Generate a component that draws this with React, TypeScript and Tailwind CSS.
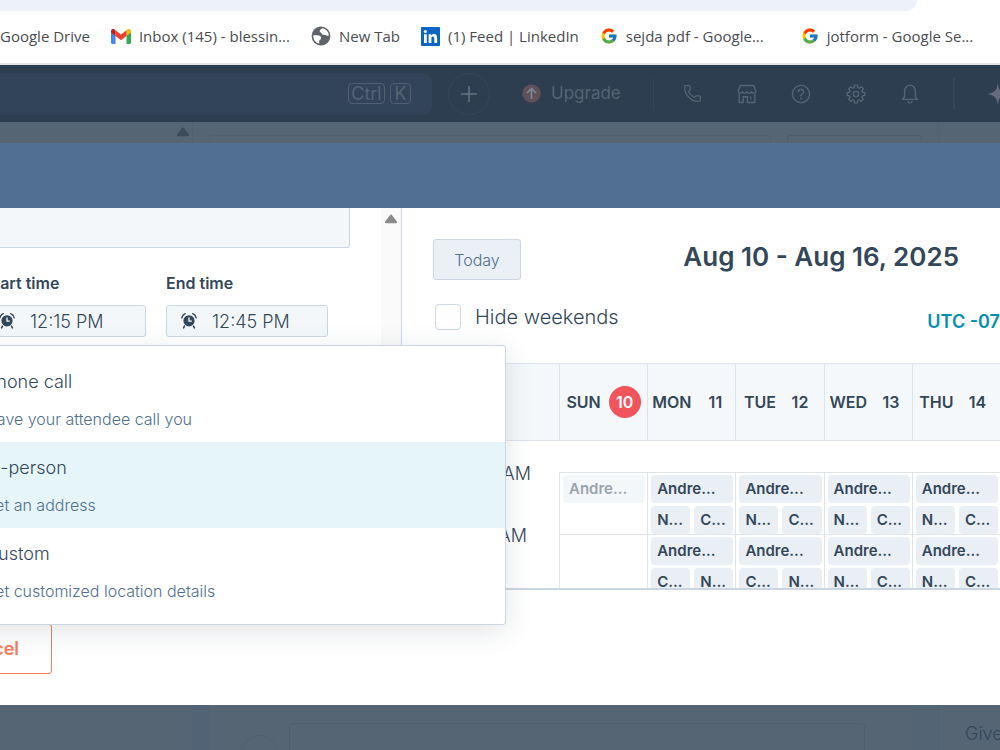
import React from "react";
import { FcGoogle } from "react-icons/fc";
import { Phone } from "lucide-react";

type Day = { name: string; date: string; today?: boolean; slots: [string, string][] };

const days: Day[] = [
  { name: "SUN", date: "10", today: true, slots: [] },
  { name: "MON", date: "11", slots: [["N...", "C..."], ["C...", "N..."]] },
  { name: "TUE", date: "12", slots: [["N...", "C..."], ["C...", "N..."]] },
  { name: "WED", date: "13", slots: [["N...", "C..."], ["N...", "C..."]] },
  { name: "THU", date: "14", slots: [["N...", "C..."], ["N...", "C..."]] },
];

const hours = ["10:00 AM", "11:00 AM"];

const locations = [
  { title: "Phone call", detail: "Have your attendee call you" },
  { title: "In-person", detail: "Set an address", active: true },
  { title: "Custom", detail: "Set customized location details" },
];

function GmailIcon() {
  return (
    <svg width="20" height="15" viewBox="0 0 20 15" aria-hidden="true">
      <path d="M0 2.2V13.6C0 14.4.6 15 1.4 15H4.5V6.2Z" fill="#4285f4" />
      <path d="M20 2.2V13.6C20 14.4 19.4 15 18.6 15H15.5V6.2Z" fill="#34a853" />
      <path d="M15.5 1.6V7L20 3.6V2C20 .2 17.9-.7 16.4.5Z" fill="#fbbc04" />
      <path d="M4.5 7V1.2L10 5.4 15.5 1.2V7L10 11.2Z" fill="#ea4335" />
      <path d="M0 2V3.6L4.5 7V1.6L3.6.5C2.1-.7 0 .2 0 2Z" fill="#c5221f" />
    </svg>
  );
}

function GlobeIcon() {
  return (
    <svg width="20" height="20" viewBox="0 0 20 20" aria-hidden="true">
      <circle cx="10" cy="10" r="9.4" fill="#5f6368" />
      <path d="M11.2 2.2C10 3.2 8.600 3.800 8.700 5.200C8.800 6.600 10.600 6.300 10.800 7.600C11 9 12.400 8.900 13.600 8.700C14.800 8.600 15.200 9.500 16.200 9.700C17 9.900 17.600 9.700 17.800 9.200C17.600 5.400 14.800 2.600 11.200 2.200Z" fill="#fff" />
      <path d="M2.300 9.200C4.200 9.500 6 9.200 7.800 9.400C9.600 9.700 10.200 11 10 12.400C9.800 13.500 8.700 13.600 8.300 14.500C7.900 15.500 8.200 16.600 8.400 17.600C4.600 16.900 2 13.600 2.300 9.200Z" fill="#fff" />
    </svg>
  );
}

function LinkedInIcon() {
  return (
    <svg width="19" height="19" viewBox="0 0 19 19" aria-hidden="true">
      <rect width="19" height="19" rx="1" fill="#0a66c2" />
      <circle cx="4.4" cy="4.5" r="1.6" fill="#fff" />
      <path d="M3 7.3H5.8V16H3ZM7.6 7.3H10.2V8.5C10.8 7.5 11.8 7.1 12.9 7.1C15.3 7.1 16.1 8.7 16.1 11.2V16H13.3V11.7C13.3 10.4 13 9.5 11.9 9.5C10.8 9.5 10.4 10.3 10.4 11.6V16H7.6Z" fill="#fff" />
    </svg>
  );
}

function AlarmIcon() {
  return (
    <svg width="16" height="16" viewBox="0 0 16 16" aria-hidden="true">
      <circle cx="8" cy="7.800" r="5.6" fill="#33475b" />
      <path d="M8 4.600V8.2H10.8" fill="none" stroke="#fff" strokeWidth="1.300" />
      <path d="M.8 4.800C1.2 2.900 2.5 1.400 4.3.7M15.2 4.800C14.8 2.900 13.5 1.400 11.7.7" fill="none" stroke="#33475b" strokeWidth="1.4" strokeLinecap="round" />
      <path d="M3.5 13.200 2.600 14.8M12.5 13.200 13.400 14.8" stroke="#33475b" strokeWidth="1.6" strokeLinecap="round" />
    </svg>
  );
}

function StoreIcon() {
  return (
    <svg width="20" height="20" viewBox="0 0 20 20" fill="none" stroke="currentColor" strokeWidth="1.4" strokeLinejoin="round" aria-hidden="true">
      <path d="M3.2 1.5H16.8L18.8 7C18.8 9.3 15.6 9.5 14.6 7.8C13.6 9.5 11 9.5 10 7.8C9 9.5 6.4 9.5 5.4 7.8C4.4 9.5 1.2 9.3 1.2 7Z" />
      <path d="M2.2 9.6V18.5H6.2V12.8H10.4V18.5H17.8V9.6M13.6 12.4V15.4" />
    </svg>
  );
}

function HelpIcon() {
  return (
    <svg width="20" height="20" viewBox="0 0 20 20" fill="none" stroke="currentColor" strokeWidth="1.4" strokeLinecap="round" aria-hidden="true">
      <circle cx="10" cy="10" r="8.6" />
      <path d="M7.4 7.8C7.4 4.4 12.6 4.4 12.6 7.7C12.6 9.8 10 9.7 10 11.8" />
      <circle cx="10" cy="14.3" r=".4" fill="currentColor" />
    </svg>
  );
}

function gearPath(): string {
  const points: string[] = [];
  for (let i = 0; i < 8; i++) {
    const a = (i * Math.PI) / 4 - Math.PI / 2;
    const at = (r: number, d: number) => `${(10 + r * Math.cos(a + d)).toFixed(2)} ${(10 + r * Math.sin(a + d)).toFixed(2)}`;
    points.push(at(6.9, -0.25), at(9, -0.17), at(9, 0.17), at(6.9, 0.25), at(6.5, 0.39));
  }
  return "M" + points.join("L") + "Z";
}

function GearIcon() {
  return (
    <svg width="20" height="20" viewBox="0 0 20 20" fill="none" stroke="currentColor" strokeWidth="1.4" strokeLinejoin="round" aria-hidden="true">
      <path d={gearPath()} />
      <circle cx="10" cy="10" r="2.6" />
    </svg>
  );
}

function BellIcon() {
  return (
    <svg width="20" height="20" viewBox="0 0 20 20" fill="none" stroke="currentColor" strokeWidth="1.4" strokeLinecap="round" strokeLinejoin="round" aria-hidden="true">
      <path d="M2.5 15.4H17.5L15.4 12.8V7C15.4 3.8 13 1.2 10 1.2S4.6 3.8 4.6 7V12.8Z" />
      <path d="M8 17.4C8.5 19.3 11.5 19.3 12 17.4" />
    </svg>
  );
}

function ScrollArrow({ className }: { className: string }) {
  return (
    <svg width="14" height="10" viewBox="0 0 14 10" className={className} aria-hidden="true">
      <path d="M7 1.6 12 8.2H2Z" fill="currentColor" stroke="currentColor" strokeWidth="2.2" strokeLinejoin="round" />
    </svg>
  );
}

function Bookmark({ icon, label, wide }: { icon?: React.ReactNode; label: string; wide?: boolean }) {
  return (
    <a href="#" className={wide ? "flex shrink-0 items-center gap-2 pr-4" : "flex shrink-0 items-center gap-2"}>
      {icon}
      <span>{label}</span>
    </a>
  );
}

function Browser() {
  return (
    <header className="shrink-0 bg-white">
      <div className="mr-[83px] h-[11px] rounded-br-[20px] bg-[#edf1fa]" />
      <nav className="flex h-[54px] items-center gap-[21px] overflow-hidden border-b-2 border-[#e3e5e7] pb-0.5 font-['Open_Sans','Noto_Sans',sans-serif] text-[15px] whitespace-nowrap text-[#4a4d51]">
        <Bookmark label="Google Drive" />
        <Bookmark icon={<GmailIcon />} label="Inbox (145) - blessin..." />
        <Bookmark icon={<GlobeIcon />} label="New Tab" />
        <Bookmark icon={<LinkedInIcon />} label="(1) Feed | LinkedIn" />
        <Bookmark icon={<FcGoogle size={18} />} label="sejda pdf - Google..." wide />
        <Bookmark icon={<FcGoogle size={18} />} label="jotform - Google Se..." wide />
      </nav>
    </header>
  );
}

function TopBar() {
  const tools = [
    { name: "Calling", icon: <Phone size={19} strokeWidth={1.6} /> },
    { name: "Marketplace", icon: <StoreIcon /> },
    { name: "Help", icon: <HelpIcon /> },
    { name: "Settings", icon: <GearIcon /> },
    { name: "Notifications", icon: <BellIcon /> },
  ];
  return (
    <div className="flex h-[57px] shrink-0 items-center overflow-hidden bg-[#2d3e50] text-[#536475]">
      <div className="flex h-[42px] w-[432px] shrink-0 items-center justify-end gap-[5px] rounded-r-[10px] bg-[#324459] pr-[21px] text-[18px]">
        <kbd className="flex h-[21px] w-[37px] items-center justify-center rounded border border-[#506070] font-[inherit]">Ctrl</kbd>
        <kbd className="flex h-[21px] w-[21px] items-center justify-center rounded border border-[#506070] font-[inherit]">K</kbd>
      </div>
      <button aria-label="Create" className="ml-4 flex size-[42px] shrink-0 items-center justify-center rounded-full border border-[#34475a] text-[#64747f]">
        <svg width="16" height="16" viewBox="0 0 16 16" stroke="currentColor" strokeWidth="1.6" aria-hidden="true">
          <path d="M8 0V16M0 8H16" />
        </svg>
      </button>
      <button className="ml-8 flex shrink-0 items-center gap-2.5 text-[17px]">
        <svg width="19" height="19" viewBox="0 0 19 19" aria-hidden="true">
          <circle cx="9.5" cy="9.5" r="9.2" fill="#5f5059" />
          <path d="M9.5 15V4.5M5 9 9.5 4.5 14 9" fill="none" stroke="#7b8791" strokeWidth="1.7" />
        </svg>
        Upgrade
      </button>
      <div className="ml-8 h-8 w-px shrink-0 bg-[#33475b]" />
      <div className="ml-3 grid flex-1 grid-cols-5">
        {tools.map((t) => (
          <button key={t.name} aria-label={t.name} className="flex items-center justify-center">
            {t.icon}
          </button>
        ))}
      </div>
      <div className="ml-4 h-8 w-0.5 shrink-0 bg-[#33475b]" />
      <svg width="13" height="22" viewBox="0 0 13 22" className="ml-8 shrink-0" aria-hidden="true">
        <path d="M11 0C11.5 7 13 9.5 22 11C13 12.5 11.5 15 11 22C9.5 14.5 8 12.5 0 11C8 9.5 9.5 7.5 11 0Z" fill="#666c7d" />
      </svg>
    </div>
  );
}

function TimeField({ id, label, value }: { id: string; label: string; value: string }) {
  return (
    <div className="w-[162px]">
      <label htmlFor={id} className="block text-[16px] leading-6 font-semibold">
        {label}
      </label>
      <div className="mt-2.5 flex h-8 items-center gap-[15px] rounded-[3px] border border-[#cbd6e2] bg-[#f3f7fa] pl-3.5">
        <span className="shrink-0">
          <AlarmIcon />
        </span>
        <input id={id} defaultValue={value} className="w-full min-w-0 bg-transparent text-[18px] font-light outline-none" />
      </div>
    </div>
  );
}

function DetailsPanel() {
  return (
    <section className="flex w-[402px] shrink-0 overflow-hidden border-r border-[#cbd6e2]">
      <div className="-ml-4 w-[366px] shrink-0">
        <textarea aria-label="Description" className="block h-10 w-full resize-none rounded-b-[3px] border border-t-0 border-[#cbd6e2] bg-[#f3f7fa]" />
        <div className="mt-[23px] flex gap-5">
          <TimeField id="start-time" label="Start time" value="12:15 PM" />
          <TimeField id="end-time" label="End time" value="12:45 PM" />
        </div>
      </div>
      <div className="ml-auto w-5 bg-[#fafafa] pt-1.5 pl-[3px]">
        <ScrollArrow className="text-[#8a8a8a]" />
      </div>
    </section>
  );
}

function EventChip({ label, faded }: { label: string; faded?: boolean }) {
  return (
    <div
      className={
        faded
          ? "h-7 rounded-[4px] bg-[#f4f7fa] pl-1.5 text-[#99a3ad]"
          : "h-7 rounded-[4px] bg-[#eaeff6] pl-1.5"
      }
    >
      {label}
    </div>
  );
}

function Calendar() {
  return (
    <section className="min-w-0 flex-1 overflow-hidden">
      <div className="flex items-start pt-[31px] pl-[31px]">
        <button className="h-[41px] w-[88px] shrink-0 rounded-[3px] border border-[#cbd6e2] bg-[#eaf0f6] text-[16px] font-light text-[#506e91]">Today</button>
        <h2 className="flex-1 pr-[41px] text-right text-[26px] leading-9 font-semibold whitespace-nowrap">Aug 10 - Aug 16, 2025</h2>
      </div>
      <div className="flex h-[83px] items-start justify-between pt-[21px] pl-[33px]">
        <label className="flex items-center gap-3.5 text-[20px] leading-8 font-light">
          <input type="checkbox" className="size-[26px] appearance-none rounded-[4px] border border-[#cbd6e2] bg-white" />
          Hide weekends
        </label>
        <a href="#" className="pt-[5px] text-[18px] leading-8 font-semibold whitespace-nowrap text-[#0091ae]">
          UTC -07
        </a>
      </div>
      <table className="w-full table-fixed border-separate border-spacing-0">
        <thead>
          <tr>
            <th className="h-[78px] w-[157px] border-y border-[#dfe3eb] bg-[#f5f8fa]" />
            {days.map((d) => (
              <th key={d.name} scope="col" className="h-[78px] border-y border-l border-[#dfe3eb] bg-[#f5f8fa] p-0 text-[16px] font-semibold">
                <span className="flex items-center justify-center gap-2">
                  {d.name}
                  <span className={d.today ? "flex size-8 items-center justify-center rounded-full bg-[#f2545b] text-white" : "flex size-8 items-center justify-center"}>
                    {d.date}
                  </span>
                </span>
              </th>
            ))}
          </tr>
        </thead>
        <tbody>
          <tr>
            <td colSpan={6} className="h-[31px] p-0" />
          </tr>
          {hours.map((hour, row) => (
            <tr key={hour}>
              <td className="p-0 align-top">
                <div className="-mt-2.5 pl-[50px] text-[18px] leading-6 font-light">{hour}</div>
              </td>
              {days.map((d) => (
                <td key={d.name} className="h-[62px] border-t border-l border-[#dfe3eb] p-0 align-top">
                  <div className="flex flex-col gap-[3px] pt-0.5 pr-0.5 pl-[3px] text-[15px] leading-[27px] font-semibold">
                    {d.slots[row] ? (
                      <>
                        <EventChip label="Andre..." />
                        <div className="grid grid-cols-2 gap-1">
                          {d.slots[row].map((s) => (
                            <EventChip key={s} label={s} />
                          ))}
                        </div>
                      </>
                    ) : (
                      row === 0 && <EventChip label="Andre..." faded />
                    )}
                  </div>
                </td>
              ))}
            </tr>
          ))}
        </tbody>
      </table>
    </section>
  );
}

function LocationMenu() {
  return (
    <div role="listbox" aria-label="Location" className="absolute top-[137px] -left-6 w-[530px] rounded-[3px] border border-[#cbd6e2] bg-white py-2.5 shadow-[0_6px_28px_rgba(45,62,80,0.14)]">
      {locations.map((l) => (
        <button
          key={l.title}
          role="option"
          aria-selected={Boolean(l.active)}
          className={
            l.active
              ? "flex h-[86px] w-full flex-col items-start gap-[13px] bg-[#e5f5f8] pt-3.5 pl-2 text-left"
              : "flex h-[86px] w-full flex-col items-start gap-[13px] bg-white pt-3.5 pl-2 text-left"
          }
        >
          <span className="text-[18px] leading-6 font-light">{l.title}</span>
          <span className="text-[16px] leading-6 font-light text-[#516f90]">{l.detail}</span>
        </button>
      ))}
    </div>
  );
}

export default function App() {
  return (
    <div className="flex h-screen flex-col overflow-hidden bg-[#566573] font-['Inter','Liberation_Sans',sans-serif] text-[#33475b]">
      <Browser />
      <TopBar />
      <div className="flex h-[21px] shrink-0 items-end overflow-hidden bg-[#566573]">
        <div className="flex h-full w-[193px] shrink-0 justify-end border-r border-[#52616f] pt-[5px] pr-0.5">
          <ScrollArrow className="text-[#3d4b59]" />
        </div>
        <div className="ml-4 h-2 flex-1 rounded-t border-x border-t border-[#52616f]" />
        <div className="ml-4 h-2 w-[135px] rounded-t border-x border-t border-[#4e5d6b]" />
        <div className="ml-4 h-full w-[62px] border-l border-[#52616f]" />
      </div>
      <main className="flex min-h-0 flex-1 flex-col bg-white">
        <div className="h-[65px] shrink-0 bg-[#516f90]" />
        <div className="relative flex min-h-0 flex-1 flex-col">
          <div className="flex min-h-0 flex-1 overflow-hidden">
            <DetailsPanel />
            <Calendar />
          </div>
          <footer className="flex shrink-0 items-start overflow-hidden border-t-2 border-[#cbd6e2] pt-[34px] pb-[31px]">
            <button className="-ml-16 flex h-[50px] w-[116px] items-center justify-end rounded-[3px] border border-[#ff7a59] bg-white pr-8 pb-0.5 text-[18px] font-semibold text-[#ff7a59]">Cancel</button>
          </footer>
          <LocationMenu />
        </div>
      </main>
      <div className="flex h-[45px] shrink-0 overflow-hidden bg-[#566573]">
        <div className="w-[193px] shrink-0 border-r border-[#526373]" />
        <div className="w-4 shrink-0 bg-[#516475]" />
        <div className="mt-[30px] ml-8 size-9 shrink-0 rounded-full border border-[#526170]" />
        <div className="mt-[18px] ml-3 flex-1 rounded-t border-x border-t border-[#4f5f6d]" />
        <div className="ml-12 w-[26px] shrink-0 border-r border-[#4f6274] bg-[#536475]" />
        <p className="w-[61px] shrink-0 pt-[15px] pl-[26px] text-[18px] leading-7 font-light text-[#33475b]">Give</p>
      </div>
    </div>
  );
}
